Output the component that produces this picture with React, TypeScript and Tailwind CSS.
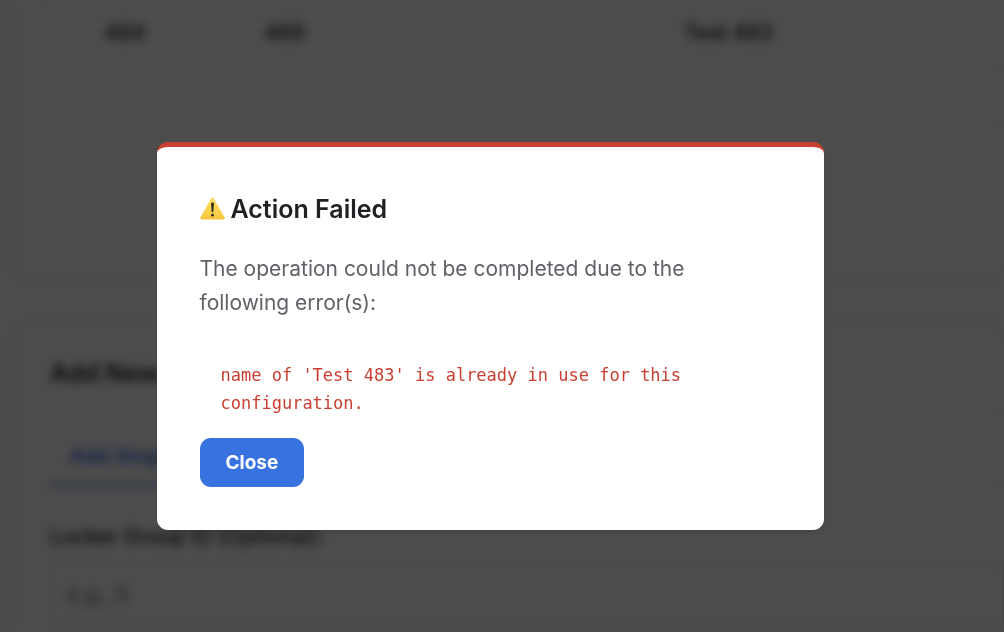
import React, { useState } from "react";

function WarningIcon() {
  return (
    <svg viewBox="0 0 50 46" className="mb-0.5 h-[23px] w-[25px] shrink-0" aria-hidden="true">
      <defs>
        <linearGradient id="warning-fill" x1="0" y1="0" x2="0" y2="1">
          <stop offset="0" stopColor="#fbdc62" />
          <stop offset="0.6" stopColor="#fad350" />
          <stop offset="1" stopColor="#f7c53f" />
        </linearGradient>
      </defs>
      <path
        d="M22.6 2.6Q25 -0.8 27.4 2.6L49 40.6Q50.6 44.6 46.8 44.8H3.2Q-0.6 44.6 1 40.6Z"
        fill="url(#warning-fill)"
      />
      <path
        d="M22.2 13.4Q22.2 11 25 11Q27.8 11 27.8 13.4L26.6 29.2Q26.4 30.8 25 30.8Q23.6 30.8 23.4 29.2Z"
        fill="#2b2a20"
      />
      <circle cx="25" cy="36.4" r="2.7" fill="#2b2a20" />
    </svg>
  );
}

function GroupsPage() {
  return (
    <div className="flex flex-col gap-11 pl-3.5 text-[#202124]">
      <section className="h-[280px] rounded-b-2xl border-b border-l border-[#e4e6e9] bg-white pl-8">
        <div className="h-[125px] rounded-bl-xl border-b border-l border-[#e4e6e9] pl-9">
          <table className="w-full table-fixed border-b border-[#e4e6e9] text-left text-[21px] font-medium">
            <colgroup>
              <col className="w-[160px]" />
              <col className="w-[420px]" />
              <col />
            </colgroup>
            <tbody>
              <tr className="h-[71px]">
                <td className="pb-1.5 pl-5">484</td>
                <td className="pb-1.5 pl-5">469</td>
                <td className="pb-1.5 pl-5">Test 483</td>
              </tr>
            </tbody>
          </table>
        </div>
      </section>

      <section className="rounded-t-2xl border-l border-t border-[#e4e6e9] bg-white pl-[35px]">
        <h1 className="mt-7 border-b border-[#e4e6e9] pb-4 text-[25px] font-semibold leading-10">
          Add New Group
        </h1>
        <div className="mt-[26px] flex border-b border-[#e4e6e9]">
          <button type="button" className="border-b-2 border-[#3871e0] px-5 pb-2 text-[20px] font-semibold leading-10 text-[#3871e0]">
            Add Single
          </button>
        </div>
        <label htmlFor="group-id" className="mt-9 block text-[21px] font-medium leading-7">
          Locker Group ID (Optional):
        </label>
        <input
          id="group-id"
          placeholder="e.g., 5"
          className="mt-3 h-[62px] w-full rounded-l-xl border border-[#dadce0] px-4 text-[21px] placeholder:text-[#757575]"
        />
      </section>
    </div>
  );
}

export default function App() {
  const [open, setOpen] = useState(true);
  return (
    <div className="h-screen overflow-hidden bg-[#fdfdfd] font-['Inter',sans-serif]">
      <GroupsPage />
      {open && (
        <div className="fixed inset-0 flex items-center justify-center bg-black/70 pr-6 pt-10 backdrop-blur-[5px]">
          <div
            role="alertdialog"
            aria-modal="true"
            aria-labelledby="dialog-title"
            aria-describedby="dialog-text"
            className="w-full max-w-[667px] rounded-[11px] border-t-[5px] border-[#c94032] bg-white px-[43px] py-[43px] shadow-md"
          >
            <h2 id="dialog-title" className="flex items-center gap-1.5 text-[25px] font-semibold leading-[38px] text-[#202124]">
              <WarningIcon />
              Action Failed
            </h2>
            <p id="dialog-text" className="mt-6 pr-4 text-[21px] leading-[34px] text-[#5f6368]">
              The operation could not be completed due to the following error(s):
            </p>
            <div className="mt-5 p-[21px] font-['DejaVu_Sans_Mono',monospace] text-[17px] leading-7 text-[#c94032]">
              name of 'Test 483' is already in use for this configuration.
            </div>
            <button
              type="button"
              onClick={() => setOpen(false)}
              className="block rounded-[11px] bg-[#3871e0] px-[26px] py-[10px] text-[19px] font-bold leading-[29px] text-white"
            >
              Close
            </button>
          </div>
        </div>
      )}
    </div>
  );
}
